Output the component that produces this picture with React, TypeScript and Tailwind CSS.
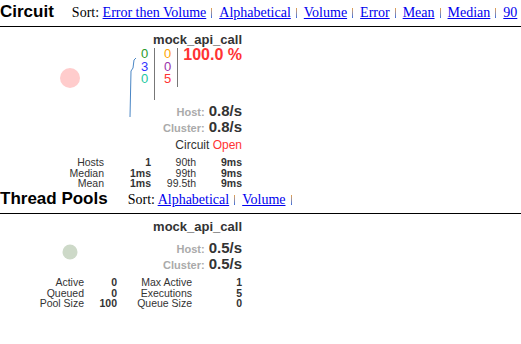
const sans = { fontFamily: '"Liberation Sans", Arial, sans-serif' };

function Sep() {
  return (
    <span className="inline-block w-[1px] h-[10px] ml-[5px] mr-[7px] bg-gradient-to-b from-[#e8a040] to-[#3a6ae0] align-[-1px]" />
  );
}

function SortLinks({ links, trailing }: { links: string[]; trailing?: boolean }) {
  return (
    <span className="text-[14px] text-black whitespace-nowrap" style={{ fontFamily: '"Liberation Serif", "Times New Roman", serif' }}>
      Sort:{" "}
      {links.map((l, i) => (
        <span key={l}>
          <a href="#" className="text-[#0000ee] underline">
            {l}
          </a>
          {(i < links.length - 1 || trailing) && <Sep />}
        </span>
      ))}
    </span>
  );
}

function Header({ title, gap, links, trailing }: { title: string; gap: string; links: string[]; trailing?: boolean }) {
  return (
    <div className="flex items-baseline h-[27px] border-b border-black overflow-hidden whitespace-nowrap">
      <span className="text-[17px] font-bold text-black leading-[21px]" style={sans}>
        {title}
      </span>
      <span className={gap}>
        <SortLinks links={links} trailing={trailing} />
      </span>
    </div>
  );
}

function Rate({ label, value }: { label: string; value: string }) {
  return (
    <div className="flex justify-end items-baseline h-[16px] leading-[16px]">
      <span className="text-[11px] font-bold text-[#aaaaaa] mr-[4px]">{label}</span>
      <span className="text-[15px] font-bold text-[#333]">{value}</span>
    </div>
  );
}

export default function App() {
  return (
    <div className="w-[521px] h-[344px] bg-white overflow-hidden" style={sans}>
      <Header
        title="Circuit"
        gap="ml-[18px]"
        links={["Error then Volume", "Alphabetical", "Volume", "Error", "Mean", "Median", "90", "99", "99.5"]}
      />

      {/* circuit card */}
      <div className="w-[250px] pr-[8px] pt-[5px] h-[160px]">
        <div className="flex">
          <svg width="140" height="103" className="shrink-0">
            <circle cx="70" cy="46" r="10" fill="#ffcccc" />
            <path d="M136 26 L134 28 L133 36 L131 39 L130 85" stroke="#4a86c5" strokeWidth="1" fill="none" />
          </svg>
          <div className="flex-1">
            <div className="text-right text-[13px] font-bold text-[#333] leading-[16px]">mock_api_call</div>
            <div className="flex h-[55px]">
              <div className="flex flex-col text-[13px] leading-[12.5px] w-[15px] pl-[1px] border-r border-[#777] h-[52px]">
                <span className="text-[#2a9a2a]">0</span>
                <span className="text-[#3333ff]">3</span>
                <span className="text-[#1ac8a0]">0</span>
              </div>
              <div className="flex flex-col text-[13px] leading-[12.5px] w-[23px] pl-[9px] border-r border-[#777] h-[39px]">
                <span className="text-[#ffa500]">0</span>
                <span className="text-[#9933aa]">0</span>
                <span className="text-[#ff3333]">5</span>
              </div>
              <div className="flex-1 text-right text-[16px] font-bold text-[#ff3333] leading-[14px]">100.0 %</div>
            </div>
            <Rate label="Host:" value="0.8/s" />
            <Rate label="Cluster:" value="0.8/s" />
          </div>
        </div>
        <div className="text-right text-[12px] leading-[14px] mt-[3px] text-[#333]">
          Circuit <span className="text-[#ff3333]">Open</span>
        </div>
        <div className="grid grid-cols-[104px_47px_45px_46px] text-right text-[10.5px] leading-[10.5px] text-[#333] mt-[5px]">
          <span>Hosts</span>
          <span className="font-bold">1</span>
          <span>90th</span>
          <span className="font-bold">9ms</span>
          <span>Median</span>
          <span className="font-bold">1ms</span>
          <span>99th</span>
          <span className="font-bold">9ms</span>
          <span>Mean</span>
          <span className="font-bold">1ms</span>
          <span>99.5th</span>
          <span className="font-bold">9ms</span>
        </div>
      </div>

      <Header title="Thread Pools" gap="ml-[20px]" links={["Alphabetical", "Volume"]} trailing />

      {/* thread pool card */}
      <div className="w-[250px] pr-[8px] pt-[5px]">
        <div className="flex">
          <svg width="140" height="53" className="shrink-0">
            <circle cx="70" cy="33" r="7.5" fill="#cdd9c8" />
          </svg>
          <div className="flex-1">
            <div className="text-right text-[13px] font-bold text-[#333] leading-[16px]">mock_api_call</div>
            <div className="h-[5px]" />
            <Rate label="Host:" value="0.5/s" />
            <Rate label="Cluster:" value="0.5/s" />
          </div>
        </div>
        <div className="grid grid-cols-[84px_33px_75px_50px] text-right text-[10.5px] leading-[10.5px] text-[#333] mt-[5px]">
          <span>Active</span>
          <span className="font-bold">0</span>
          <span>Max Active</span>
          <span className="font-bold">1</span>
          <span>Queued</span>
          <span className="font-bold">0</span>
          <span>Executions</span>
          <span className="font-bold">5</span>
          <span>Pool Size</span>
          <span className="font-bold">100</span>
          <span>Queue Size</span>
          <span className="font-bold">0</span>
        </div>
      </div>
    </div>
  );
}
